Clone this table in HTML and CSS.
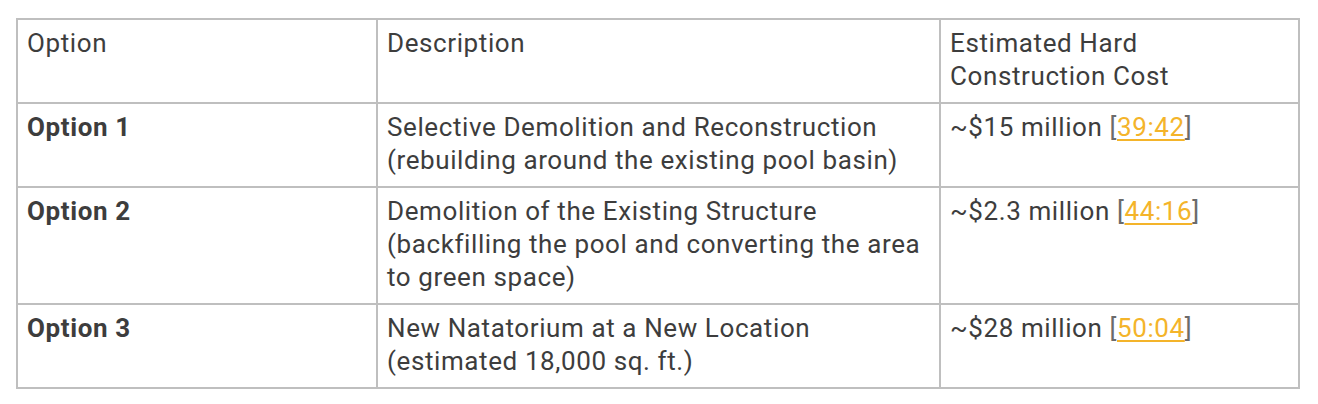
FILE: index.html
```html
<!DOCTYPE html>
<html>
<head>
<meta charset="utf-8">
<link rel="stylesheet" href="styles.css">
</head>
<body>
<table class="cost-table">
  <colgroup>
    <col class="c-opt">
    <col class="c-desc">
    <col class="c-cost">
  </colgroup>
  <thead>
    <tr>
      <th>Option</th>
      <th>Description</th>
      <th>Estimated Hard<br>Construction Cost</th>
    </tr>
  </thead>
  <tbody>
    <tr>
      <td class="opt">Option 1</td>
      <td>Selective Demolition and Reconstruction<br>(rebuilding around the existing pool basin)</td>
      <td>~$15 million <span class="br">[</span><a class="ts" href="#">39:42</a><span class="br">]</span></td>
    </tr>
    <tr>
      <td class="opt">Option 2</td>
      <td>Demolition of the Existing Structure<br>(backfilling the pool and converting the area<br>to green space)</td>
      <td>~$2.3 million <span class="br">[</span><a class="ts" href="#">44:16</a><span class="br">]</span></td>
    </tr>
    <tr>
      <td class="opt">Option 3</td>
      <td>New Natatorium at a New Location<br>(estimated 18,000 sq. ft.)</td>
      <td>~$28 million <span class="br">[</span><a class="ts" href="#">50:04</a><span class="br">]</span></td>
    </tr>
  </tbody>
</table>
</body>
</html>
```

FILE: styles.css
```css
html, body {
  margin: 0;
  padding: 0;
  background: #ffffff;
}

body {
  padding: 18px 0 0 16px;
  font-family: Roboto, "Liberation Sans", sans-serif;
  font-size: 26px;
  line-height: 33px;
  letter-spacing: 0.6px;
  color: #3d3d3d;
}

.cost-table {
  border-collapse: separate;
  border-spacing: 0;
  table-layout: fixed;
  width: 1284px;
  border-top: 2px solid #bfbfbf;
  border-left: 2px solid #bfbfbf;
}

.c-opt { width: 360px; }
.c-desc { width: 563px; }
.c-cost { width: 359px; }

.cost-table th,
.cost-table td {
  box-sizing: border-box;
  border-right: 2px solid #bfbfbf;
  border-bottom: 2px solid #bfbfbf;
  padding: 7px 9px 9px 9px;
  text-align: left;
  vertical-align: top;
  font-weight: 400;
  white-space: nowrap;
}

.cost-table td.opt {
  font-weight: 700;
}

.br {
  color: #6b6b6b;
}

.ts {
  color: #f4b42a;
  text-decoration: underline;
  text-underline-offset: 3px;
  text-decoration-thickness: 2px;
}
```
